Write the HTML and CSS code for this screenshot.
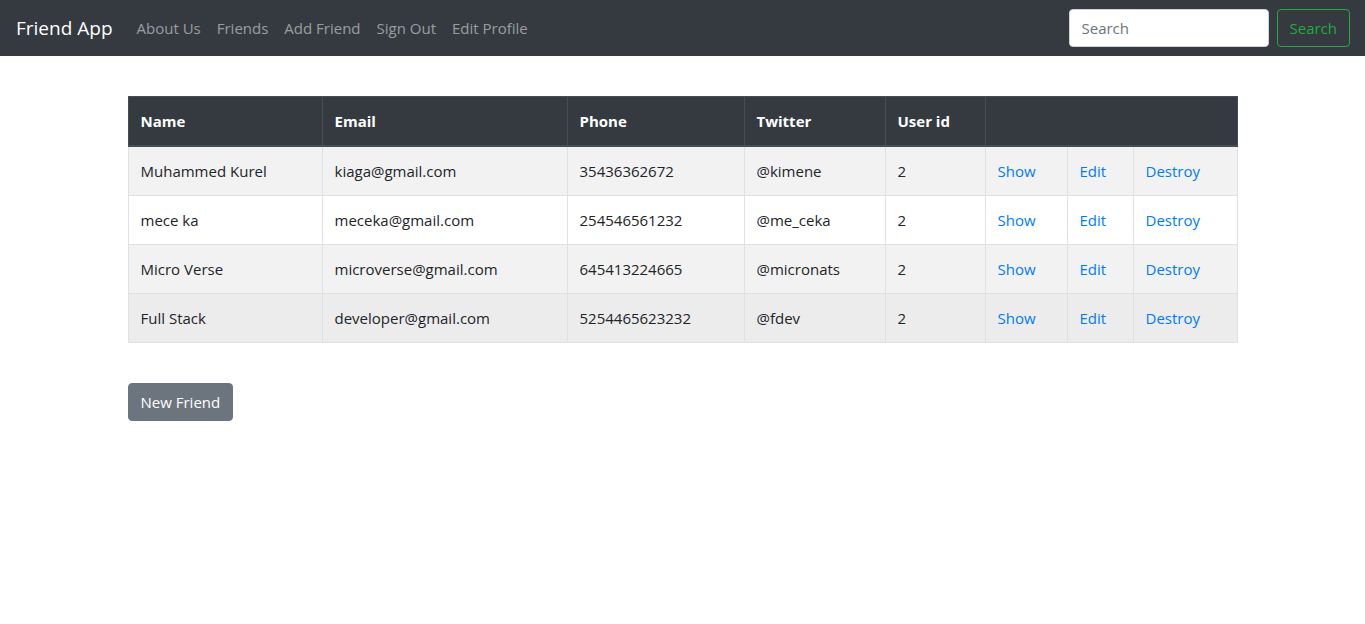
FILE: index.html
```html
<!DOCTYPE html>
<html lang="en">
<head>
<meta charset="utf-8">
<title>Friend App</title>
<link rel="stylesheet" href="styles.css">
</head>
<body>
<nav class="navbar">
  <a class="brand" href="#">Friend App</a>
  <ul class="nav">
    <li><a class="nav-link" href="#">About Us</a></li>
    <li><a class="nav-link" href="#">Friends</a></li>
    <li><a class="nav-link" href="#">Add Friend</a></li>
    <li><a class="nav-link" href="#">Sign Out</a></li>
    <li><a class="nav-link" href="#">Edit Profile</a></li>
  </ul>
  <form class="search-form">
    <input class="search-input" type="search" placeholder="Search">
    <button class="btn btn-outline-success" type="button">Search</button>
  </form>
</nav>
<main class="container">
  <table class="table">
    <colgroup>
      <col class="c-name"><col class="c-email"><col class="c-phone"><col class="c-twitter"><col class="c-uid"><col class="c-show"><col class="c-edit"><col class="c-destroy">
    </colgroup>
    <thead>
      <tr><th>Name</th><th>Email</th><th>Phone</th><th>Twitter</th><th>User id</th><th colspan="3"></th></tr>
    </thead>
    <tbody>
      <tr class="striped"><td>Muhammed Kurel</td><td>kiaga@gmail.com</td><td>35436362672</td><td>@kimene</td><td>2</td><td><a href="#">Show</a></td><td><a href="#">Edit</a></td><td><a href="#">Destroy</a></td></tr>
      <tr><td>mece ka</td><td>meceka@gmail.com</td><td>254546561232</td><td>@me_ceka</td><td>2</td><td><a href="#">Show</a></td><td><a href="#">Edit</a></td><td><a href="#">Destroy</a></td></tr>
      <tr class="striped"><td>Micro Verse</td><td>microverse@gmail.com</td><td>645413224665</td><td>@micronats</td><td>2</td><td><a href="#">Show</a></td><td><a href="#">Edit</a></td><td><a href="#">Destroy</a></td></tr>
      <tr class="hovered"><td>Full Stack</td><td>developer@gmail.com</td><td>5254465623232</td><td>@fdev</td><td>2</td><td><a href="#">Show</a></td><td><a href="#">Edit</a></td><td><a href="#">Destroy</a></td></tr>
    </tbody>
  </table>
  <a class="btn btn-secondary" href="#">New Friend</a>
</main>
</body>
</html>
```

FILE: styles.css
```css
* { box-sizing: border-box; }
html, body { margin: 0; padding: 0; }
body {
  font-family: "Open Sans", "Noto Sans", "Liberation Sans", sans-serif;
  font-size: 15px;
  line-height: 24px;
  color: #212529;
  background: #fff;
}
a { text-decoration: none; }

.navbar {
  display: flex;
  align-items: center;
  background: #343a40;
  padding: 8px 15px 8px 16px;
  height: 56px;
}
.brand {
  color: #fff;
  font-size: 19px;
  line-height: 30px;
  padding: 5px 0;
  margin-right: 16px;
  white-space: nowrap;
}
.nav {
  display: flex;
  list-style: none;
  margin: 0;
  padding: 0;
  flex: 1;
}
.nav-link {
  display: block;
  padding: 8px 8px;
  color: rgba(255,255,255,.5);
  white-space: nowrap;
}
.search-form {
  display: flex;
  align-items: center;
}
.search-input {
  width: 200px;
  height: 38px;
  padding: 6px 12px;
  font: inherit;
  color: #495057;
  background: #fff;
  border: 1px solid #ced4da;
  border-radius: 4px;
  margin-right: 8px;
}
.search-input::placeholder { color: #6c757d; }

.btn {
  display: inline-block;
  font: inherit;
  line-height: 24px;
  padding: 6px 12px;
  border: 1px solid transparent;
  border-radius: 4px;
  cursor: pointer;
}
.btn-outline-success {
  color: #28a745;
  background: transparent;
  border-color: #28a745;
}
.btn-secondary {
  color: #fff;
  background: #6c757d;
  border-color: #6c757d;
}

.container {
  width: 1140px;
  margin: 40px auto 0;
  padding: 0 15px;
}
.table {
  width: 1109px;
  table-layout: fixed;
  border-collapse: collapse;
  margin-bottom: 40px;
}
.c-name { width: 194px; }
.c-email { width: 245px; }
.c-phone { width: 177px; }
.c-twitter { width: 141px; }
.c-uid { width: 100px; }
.c-show { width: 82px; }
.c-edit { width: 66px; }
.c-destroy { width: 104px; }

.table th, .table td {
  padding: 12px;
  text-align: left;
  vertical-align: top;
  border: 1px solid #dee2e6;
  white-space: nowrap;
}
.table thead th {
  background: #343a40;
  color: #fff;
  font-weight: 700;
  border-color: #454d55;
  border-bottom: 2px solid #454d55;
}
.table tbody tr.striped { background: #f2f2f2; }
.table tbody tr.hovered { background: #ececec; }
.table td a { color: #007bff; }
```
